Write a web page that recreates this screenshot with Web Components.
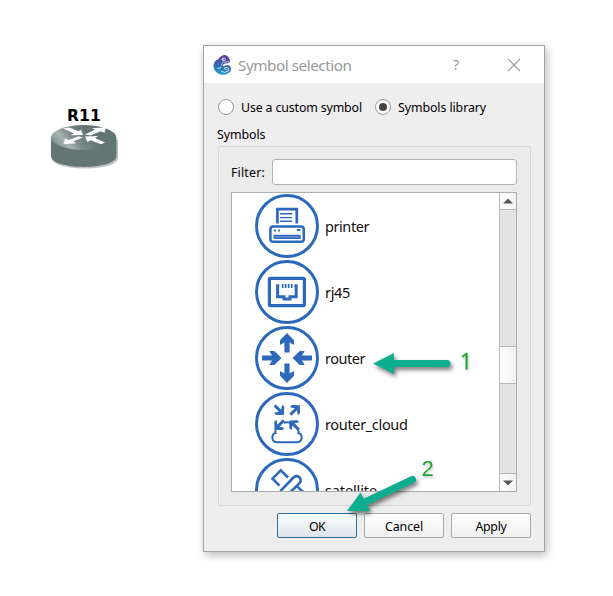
<!DOCTYPE html>
<html lang="en"><head><meta charset="utf-8"><title>Symbol selection</title>
<style>
html,body{margin:0;width:613px;height:596px;overflow:hidden;background:#fff}
body{font-family:"Noto Sans","Open Sans",sans-serif}
</style></head><body>
<topology-canvas></topology-canvas>
<script>
const define=(name,html,init)=>customElements.define(name,class extends HTMLElement{
  connectedCallback(){
    if(this.shadowRoot)return;
    this.attachShadow({mode:'open'}).innerHTML=html;
    if(init)init.call(this,this.shadowRoot);
  }
});

// A single line of text whose tracking is adjusted to fill the given width.
define('fit-text',`<style>:host{display:inline-block;white-space:pre;line-height:20px;height:20px}span{display:inline-block}</style><span><slot></slot></span>`,function(r){
  const w=+this.getAttribute('w'),s=r.querySelector('span'),n=this.textContent.length;
  this.style.width=w+'px';
  s.style.letterSpacing=((w-s.getBoundingClientRect().width)/n)+'px';
});

define('radio-option',`<style>
:host{display:flex;align-items:center;gap:7px;height:20px;font-size:12.4px;color:#000}
i{box-sizing:border-box;width:16px;height:16px;border:1px solid #999;border-radius:50%;background:#fff;display:grid;place-items:center}
:host([checked]) i::after{content:"";width:8px;height:8px;border-radius:50%;background:#444}
::slotted(*){margin-top:2px}
</style><i></i><slot></slot>`);

define('push-button',`<style>
:host{box-sizing:border-box;width:80px;height:25px;border:1px solid #a8a8a8;border-radius:2px;background:linear-gradient(#fff,#f0f0f0);display:flex;justify-content:center;align-items:center;font-size:12.4px;color:#000;padding-top:3px}
:host([default]){border-color:#2e6f9b;background:linear-gradient(#fbfdfe,#dde4e9)}
</style><slot></slot>`);

const glyphs={
printer:`<path d="M22.4 29.5V15.1H41.8V29.5" stroke-width="2.7"/><path d="M25 19.8H37.3M25 23.6H37.3M25 27.3H37.3" stroke-width="1.4"/><rect x="15.4" y="32.4" width="33.4" height="15.4" rx="2.8" stroke-width="2.5"/><path d="M18.9 36.5h2M22.9 36.5h2M41.8 36h3.5" stroke-width="2"/><rect x="19.1" y="41.4" width="26" height="3" fill="#5c89cb" stroke-width="1.2"/>`,
rj45:`<rect x="14.4" y="18.4" width="35" height="27.2" rx="1" stroke-width="3.2"/><path d="M24.3 25.7H22.6V36.8H29V39H35V36.8H41.2V25.7H39.4" stroke-width="3"/><path d="M27.7 24v4M30.7 24v4M33.7 24v4M36.7 24v4" stroke-width="1.7"/>`,
router:[0,180].map(a=>`<path transform="rotate(${a} 32 32)" fill="#2c68bb" stroke="none" d="M32 7L39 14.2V19L34.6 16.4V26.5H29.4V16.4L25 19V14.2Z"/>`).join('')+[0,180].map(a=>`<path transform="rotate(${a} 32 32)" fill="#2c68bb" stroke="none" d="M26.5 32L19.3 25H14.3L17 29.4H7V34.6H17L14.3 39H19.3Z"/>`).join(''),
cloud:[[29,22.7,135],[44.8,13.3,45],[19.5,37.7,225],[34.5,28.4,-45]].map(([x,y,a])=>`<path transform="translate(${x} ${y}) rotate(${a})" fill="#2c68bb" stroke="none" d="M0 0L5.7 5.4V8.4L1.5 5.6V13.2H-1.5V5.6L-5.7 8.4V5.4Z"/>`).join('')+`<path d="M28.8 30.8Q32 29.6 35.2 30.8M20.6 37.5Q20 39 20.6 41C16 42.2 16.2 50.3 22.2 50.3H41.8C47.8 50.3 48 42.2 43.4 41Q44 39 42.6 37" stroke-width="2"/>`,
satellite:`<path d="M33 19.5L25.8 12.4L17.5 20.7L24.5 27.7M25.3 33.2L38 20C42 15.8 48.5 20.5 44.5 25.2L34.5 35M41.4 27.6L48 34" stroke-width="2.6"/>`
};
define('symbol-row',`<style>
:host{display:flex;align-items:center;gap:6px;height:64px;flex:none;font-size:14.5px;color:#111}
svg{display:block;width:64px;height:64px}
</style><svg viewBox="0 0 64 64" fill="none" stroke="#2c68bb"></svg><slot></slot>`,function(r){
  r.querySelector('svg').innerHTML='<circle cx="32" cy="32" r="30.5" stroke-width="3"/>'+glyphs[this.getAttribute('icon')];
});

define('scroll-bar',`<style>
:host{box-sizing:border-box;width:17px;display:flex;flex-direction:column;border-left:1px solid #bbb;background:#e3e3e3}
div{box-sizing:border-box;display:grid;place-items:center;background:linear-gradient(90deg,#fff,#f1f1f1);flex:none}
.u{height:17px;border-bottom:1px solid #b5b5b5}.d{height:18px;border-top:1px solid #b5b5b5;margin-top:auto}
.t{height:38px;border:solid #b5b5b5;border-width:1px 0;margin-top:136px}
svg{display:block}
</style><div class="u"><svg width="10" height="6"><path d="M0 5.5L5 .5L10 5.5Z" fill="#555"/></svg></div><div class="t"></div><div class="d"><svg width="10" height="6"><path d="M0 .5H10L5 5.5Z" fill="#555"/></svg></div>`);

define('symbol-list',`<style>
:host{box-sizing:border-box;display:flex;width:286px;height:300px;border:1px solid #adadad;background:#fff}
.v{flex:1;overflow:hidden;display:flex;flex-direction:column;gap:2px;padding:1px 0 0 23px;box-sizing:border-box}
</style><div class="v"><slot></slot></div><scroll-bar></scroll-bar>`);

define('title-bar',`<style>
:host{display:flex;align-items:center;box-sizing:border-box;height:37px;background:#fff;padding:0 23px 0 9px;color:#999;font-size:15.3px;flex:none}
svg{display:block}fit-text.t{margin-left:5px}.q{margin-left:auto;font-size:14.5px;margin-right:46px;margin-top:-1px}
</style>
<svg width="20" height="22" viewBox="0 0 20 22"><defs><linearGradient id="g" x1=".6" y1="0" x2=".4" y2="1"><stop stop-color="#6b3192"/><stop offset=".45" stop-color="#3b62a9"/><stop offset="1" stop-color="#16a0c8"/></linearGradient></defs>
<path d="M8 2.5Q12-.5 15 2.8Q17.2 5 17 7.8L14.5 9.4Q11 9 9.8 11Q9.6 12.4 10.6 12.6Q13 10 16.7 11.8Q19.7 15.5 16.4 18.6Q11.5 22.5 5.2 19.4Q-.2 16 .6 10.5Q1.3 6.4 5.3 5.2Q6 3.7 8 2.5Z" fill="url(#g)"/>
<path d="M8.2 17.4Q11.8 19.6 15 17.2Q17 14.8 14.2 13.4Q11.5 13.1 11.6 15Q12.4 16.3 13.7 15.3M4.4 14.4Q6.6 14.6 8 13.3" fill="none" stroke="#dceffa" stroke-width="1"/><circle cx="10.8" cy="5.3" r="1.9" fill="#dfe6f6"/><circle cx="11.2" cy="5.3" r=".9" fill="#453f95"/><path d="M16 7.6L10.3 8.4Q8 9.4 8.3 11.4" fill="none" stroke="#dde" stroke-width=".7"/></svg>
<fit-text class="t" w="113.5">Symbol selection</fit-text><fit-text class="q" w="8">?</fit-text>
<svg width="14" height="14"><path d="M1 1L13 13M13 1L1 13" stroke="#999" stroke-width="1.1"/></svg>`);

define('symbol-dialog',`<style>
:host{box-sizing:border-box;width:342px;height:507px;display:flex;flex-direction:column;border:1px solid #a3a3a3;background:#eee;box-shadow:2px 3px 9px rgba(0,0,0,.28);color:#000;font-size:12.4px}
.radios{display:flex;gap:13px;padding:14px 0 0 14px}
.cap{margin:8px 0 0 13px;height:20px;display:flex}
.group{box-sizing:border-box;width:313px;height:360px;margin:1px 0 0 14px;border:1px solid #d6d6d6;border-radius:2px;background:#ebebeb;padding:12px}
.filter{display:flex;align-items:center;gap:7px;height:26px;margin-bottom:7px}
.filter fit-text{margin-top:2px}
.in{box-sizing:border-box;width:245px;height:26px;border:1px solid #b3b3b3;border-radius:3px;background:#fff}
.acts{display:flex;gap:7px;justify-content:flex-end;padding:7px 13px 0 0}
</style><title-bar></title-bar>
<div class="radios"><radio-option><fit-text w="121">Use a custom symbol</fit-text></radio-option><radio-option checked><fit-text w="88">Symbols library</fit-text></radio-option></div>
<div class="cap"><fit-text w="48.5">Symbols</fit-text></div>
<div class="group"><div class="filter"><fit-text w="34">Filter:</fit-text><div class="in"></div></div>
<symbol-list>
<symbol-row icon="printer"><fit-text w="44">printer</fit-text></symbol-row>
<symbol-row icon="rj45"><fit-text w="25">rj45</fit-text></symbol-row>
<symbol-row icon="router"><fit-text w="40">router</fit-text></symbol-row>
<symbol-row icon="cloud"><fit-text w="82.5">router_cloud</fit-text></symbol-row>
<symbol-row icon="satellite"><fit-text w="52">satellite</fit-text></symbol-row>
</symbol-list></div>
<div class="acts"><push-button default><fit-text w="16">OK</fit-text></push-button><push-button><fit-text w="38">Cancel</fit-text></push-button><push-button><fit-text w="31">Apply</fit-text></push-button></div>`);

define('router-node',`<style>:host{display:flex;flex-direction:column;align-items:center;width:70px;font:bold 15.6px "DejaVu Sans",sans-serif;color:#000}svg{display:block;margin-top:-2px}</style>
<fit-text w="34">R11</fit-text>
<svg width="70" height="48" viewBox="0 0 70 48"><defs><linearGradient id="top" x1="0" y1=".6" x2=".6" y2=".4"><stop stop-color="#7f908e"/><stop offset=".3" stop-color="#a8b4b2"/><stop offset=".55" stop-color="#7b8c8a"/><stop offset="1" stop-color="#637573"/></linearGradient></defs>
<path d="M3 16V34C3 48 69 48 69 34V16Z" fill="#c0c4c3"/><path d="M2 14V32C2 46.5 67.5 46.5 67.5 32V14Z" fill="#647674"/><ellipse cx="34.7" cy="13.5" rx="32.7" ry="12.5" fill="url(#top)"/>
<g fill="#fff"><path d="M14 4.5L20 3.5L29.5 7.3L32 5.8L34 11L21.5 11.3L25 9.5Z"/><path d="M36 10.5L46 5.8L43 4.2L57 3.3L55.5 8.8L51.5 7.2L41.5 11.5Z"/><path d="M14.5 20.2L16 14.4L20 16L29.5 12.2L34 13.5L24 17.5L27.5 19.3Z"/><path d="M36 12.6L49 12L46 14L56 18.4L52 20.3L41.5 16.2L38.5 17.9Z"/></g></svg>`);

define('callout-layer',`<style>:host{display:block;width:613px;height:596px}svg{display:block;overflow:visible}text{font-family:"Liberation Sans",sans-serif;font-size:22px;fill:#20a535}.one{font-family:"Open Sans","Noto Sans",sans-serif;font-size:21px;stroke:#20a535;stroke-width:.3px}g{filter:drop-shadow(2px 3px 2px rgba(0,0,0,.5))}.n{filter:drop-shadow(1px 2px 1px rgba(0,0,0,.22))}</style>
<svg width="613" height="596"><g fill="#0cae8f" stroke="#0cae8f"><path d="M373 363.5L394 353V374Z" stroke="none"/><path d="M392 363.5H447" stroke-width="7" stroke-linecap="round"/></g>
<g fill="#0cae8f" stroke="#0cae8f"><path d="M347 511L360.5 492.5L370 511Z" stroke="none"/><path d="M364 502.5L412.5 479.5" stroke-width="7" stroke-linecap="round"/></g>
<g class="n"><text class="one" x="460" y="369">1</text><text x="421.5" y="475.5">2</text></g></svg>`);

define('topology-canvas',`<style>
:host{display:block;position:relative;width:613px;height:596px;background:#fff}
router-node{position:absolute;left:49px;top:106px}
symbol-dialog{position:absolute;left:203px;top:45px}
callout-layer{position:absolute;left:0;top:0;pointer-events:none}
</style><router-node></router-node><symbol-dialog></symbol-dialog><callout-layer></callout-layer>`);
</script></body></html>
